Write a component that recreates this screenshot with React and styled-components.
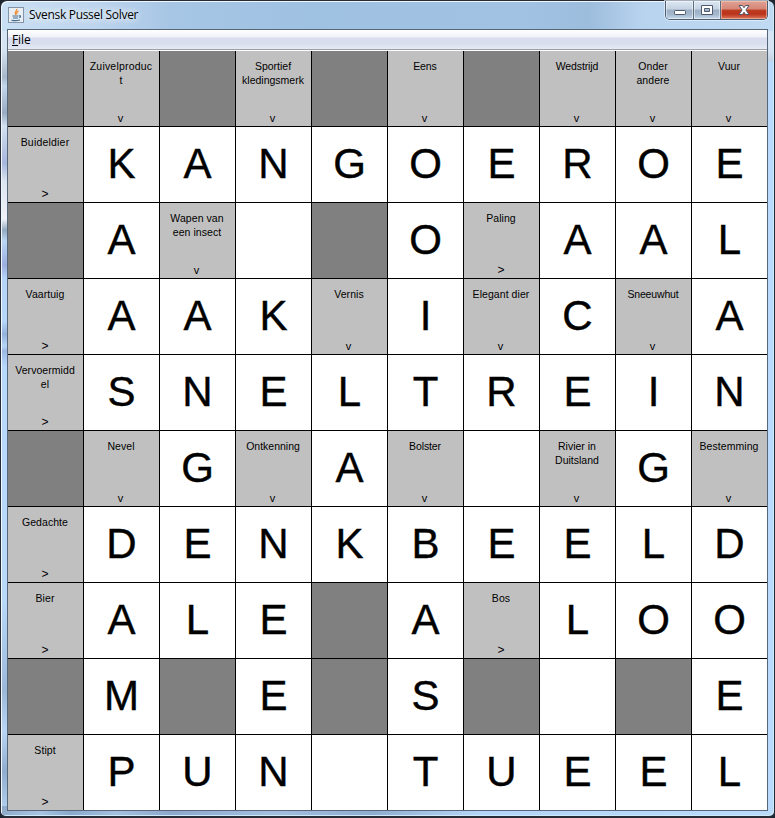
import React from "react";
import styled, { createGlobalStyle } from "styled-components";

const GlobalStyle = createGlobalStyle`
  html, body { margin: 0; padding: 0; background: #1d2530; overflow: hidden; }
  * { box-sizing: border-box; }
`;

const Frame = styled.div`
  display: flex;
  flex-direction: column;
  width: 775px;
  height: 818px;
  padding: 0 5px 5px 6px;
  border: 2px solid #272b36;
  border-width: 1px 1px 2px 1px;
  border-radius: 7px 7px 6px 6px;
  box-shadow: inset 1px 1px 0 #eef7ff, inset -1px -1px 0 #cbe9f8;
  background:
    linear-gradient(90deg, rgba(255,255,255,0) 12px, rgba(255,255,255,0) 762px, #b9dafa 763px) 0 60px no-repeat,
    linear-gradient(90deg, #8faac9 0, #a9c4e3 5%, #8ba9cc 9%, #a5bfdf 15%, #8da8cb 22%, #a3bedf 35%, #90accf 48%, #a8c4e6 56%, #b4d5f8 62%, #b9dafa) 0 100% / 100% 10px no-repeat,
    linear-gradient(90deg, #c9dff3 0, #bdd5ee 12%, #a7c6e5 22%, #9fc1e2 40%, #a1c2e3 68%, #9dbddd 76%, #b8d3ee 83%, #c0daf3) 0 0 / 100% 30px no-repeat,
    linear-gradient(180deg, #dcebfa 0, #d4e2f1 50px, #a8b7ca 76px, #c4d7ed 85px, #99abc2 112px, #d3e1f0 125px, #a7b6dd 162px, #dbe5f0 180px, #f0f2f7 218px, #94a9bf 229px, #bbd7f5 240px, #9baee0 264px, #b5d4f7 277px, #b7d7fa 320px, #94b1db 333px, #b5d5f8 345px, #9db9e2 350px, #b7d9fc 365px, #b9d9fa 600px, #9cb8d8 690px, #b9d7f5 730px, #91adce 770px, #b8d5f3 100%);
`;

const TitleBar = styled.header`
  display: flex;
  height: 28px;
  flex: none;
  align-items: flex-start;
  justify-content: space-between;
`;

const TitleGroup = styled.div`
  display: flex;
  gap: 5px;
  padding: 6px 0 0 1px;
`;

const Title = styled.span`
  font: 12px/16px "Open Sans", "Noto Sans", sans-serif;
  letter-spacing: ${(p) => p.$spacing};
  color: #000;
  text-shadow: 0 0 7px #fff, 0 0 9px #fff;
`;

const Controls = styled.div`
  display: flex;
  width: 103px;
  height: 19px;
  margin-right: 1px;
  border: 1px solid #4e5c70;
  border-top: 0;
  border-radius: 0 0 5px 5px;
  overflow: hidden;
  box-shadow: 0 0 0 1px rgba(230,244,255,.65);
`;

const ControlButton = styled.button`
  display: block;
  flex: 0 0 ${(p) => p.$width};
  height: 18px;
  padding: 0;
  border: 0;
  border-right: ${(p) => (p.$close ? 0 : "1px solid #5d6b7e")};
  box-shadow: inset 0 0 0 1px ${(p) => (p.$close ? "rgba(255,205,185,.55)" : "rgba(255,255,255,.5)")};
  background: ${(p) =>
    p.$close
      ? "linear-gradient(#e0a295 0, #d58676 45%, #bd3d25 50%, #bb3219 72%, #d9795f 100%)"
      : "linear-gradient(#dce8f4 0, #c4d2e1 45%, #9cafc5 50%, #a5b8ce 75%, #c5d8eb 100%)"};
  svg { display: block; margin: auto; }
`;

const Client = styled.main`
  display: flex;
  flex-direction: column;
  width: 761px;
  height: 782px;
  flex: none;
  border: 1px solid #56677a;
  background: #fff;
`;

const MenuBar = styled.nav`
  height: 21px;
  flex: none;
  padding: 3px 4px;
  background: linear-gradient(#fff 0, #f0f2f9 7px, #d9ddef 8px, #dadfef 14px, #e6eaf6 19px);
  border-bottom: 1px solid #fff;
  box-shadow: inset 0 -1px 0 #9d9fa5;
`;

const MenuItem = styled.span`
  display: block;
  font: 12px/14px "Open Sans", "Noto Sans", sans-serif;
  letter-spacing: -0.1px;
  u { text-underline-offset: 1px; }
`;

const Board = styled.section`
  display: grid;
  grid-template-columns: repeat(9, 76px) 75px;
  grid-template-rows: repeat(10, 76px);
  width: 759px;
  height: 759px;
  overflow: hidden;
  font-family: "Liberation Sans", Arial, sans-serif;
  color: #000;
`;

const Cell = styled.div`
  border-right: 1px solid #000;
  border-bottom: 1px solid #000;
  background: ${(p) => p.$fill};
  &:nth-child(10n) { border-right: 0; }
`;

const LetterCell = styled(Cell)`
  padding-top: 14px;
  font-size: 42px;
  line-height: 46px;
  text-align: center;
  -webkit-text-stroke: 0.4px #000;
`;

const ClueCell = styled(Cell)`
  display: flex;
  flex-direction: column;
  align-items: center;
  justify-content: space-between;
  padding: 8px 0 1px;
`;

const ClueText = styled.div`
  padding-right: 1px;
  font-size: 10.5px;
  line-height: 14px;
  text-align: center;
  white-space: pre;
  letter-spacing: ${(p) => p.$spacing}px;
`;

const Arrow = styled.div`
  font-size: ${(p) => (p.$right ? 12 : 11)}px;
  line-height: 14px;
  padding-right: ${(p) => (p.$right ? 1 : 2)}px;
`;

const JavaIcon = () => (
  <svg width="16" height="16" viewBox="0 0 16 16">
    <rect x=".5" y=".5" width="15" height="15" fill="#e8eef3" stroke="#8494a6" />
    <path d="M8.8 2C9.5 4 5.5 4.8 7.7 8M10.5 4.2C8 5.4 8.5 6 9 7.5" fill="none" stroke="#ef8a32" strokeWidth="1.3" />
    <path d="M4.5 9h6M5 11h5M3.5 13.2c2 .6 6 .5 8.5-.2M11 9c2-.7 2 1 .3 1.8" fill="none" stroke="#416d93" strokeWidth="1.2" />
  </svg>
);

const MinimizeIcon = () => (
  <svg width="14" height="14" viewBox="0 0 14 14">
    <rect x="1.5" y="7.5" width="11" height="4" rx=".7" fill="#fff" stroke="#515a6d" />
  </svg>
);

const MaximizeIcon = () => (
  <svg width="14" height="14" viewBox="0 0 14 14">
    <path d="M1.5 2.5h11v9h-11zM4.5 5.5v3h5v-3z" fill="#fff" fillRule="evenodd" stroke="#515a6d" />
  </svg>
);

const CloseIcon = () => (
  <svg width="14" height="14" viewBox="0 0 14 14">
    <path d="M2 2.5h3.4L7 4.7l1.6-2.2H12L8.9 7l3.1 4.5H8.6L7 9.3l-1.6 2.2H2L5.1 7z" fill="#fff" stroke="#535566" />
  </svg>
);

const clue = (text, arrow, spacing = 0.06) => ({ text, arrow, spacing });

// "#" is a blocked square, "_" is an empty answer square.
const rows = [
  ["#", clue("Zuivelproduc\nt", "v", 0.2), "#", clue("Sportief\nkledingsmerk", "v", 0), "#", clue("Eens", "v", -0.1), "#", clue("Wedstrijd", "v", -0.1), clue("Onder\nandere", "v"), clue("Vuur", "v")],
  [clue("Buideldier", ">", 0.2), ..."KANGOEROE"],
  ["#", "A", clue("Wapen van\neen insect", "v"), "_", "#", "O", clue("Paling", ">"), "A", "A", "L"],
  [clue("Vaartuig", ">"), "A", "A", "K", clue("Vernis", "v"), "I", clue("Elegant dier", "v"), "C", clue("Sneeuwhut", "v", -0.15), "A"],
  [clue("Vervoermidd\nel", ">"), ..."SNELTREIN"],
  ["#", clue("Nevel", "v"), "G", clue("Ontkenning", "v", 0), "A", clue("Bolster", "v", -0.1), "_", clue("Rivier in\nDuitsland", "v", 0), "G", clue("Bestemming", "v")],
  [clue("Gedachte", ">"), ..."DENKBEELD"],
  [clue("Bier", ">"), "A", "L", "E", "#", "A", clue("Bos", ">"), "L", "O", "O"],
  ["#", "M", "#", "E", "#", "S", "#", "_", "#", "E"],
  [clue("Stipt", ">"), ..."PUN_TUEEL"],
];

function Square({ value }) {
  if (value === "#") return <Cell $fill="#808080" />;
  if (typeof value === "string") {
    return <LetterCell $fill="#fff">{value === "_" ? "" : value}</LetterCell>;
  }
  return (
    <ClueCell $fill="#c0c0c0">
      <ClueText $spacing={value.spacing}>{value.text}</ClueText>
      <Arrow $right={value.arrow === ">"}>{value.arrow}</Arrow>
    </ClueCell>
  );
}

export default function App() {
  return (
    <>
      <GlobalStyle />
      <Frame>
        <TitleBar>
          <TitleGroup>
            <JavaIcon />
            <Title $spacing="-0.3px">Svensk Pussel Solver</Title>
          </TitleGroup>
          <Controls>
            <ControlButton $width="28px" aria-label="Minimize"><MinimizeIcon /></ControlButton>
            <ControlButton $width="27px" aria-label="Maximize"><MaximizeIcon /></ControlButton>
            <ControlButton $width="46px" $close aria-label="Close"><CloseIcon /></ControlButton>
          </Controls>
        </TitleBar>
        <Client>
          <MenuBar><MenuItem><u>F</u>ile</MenuItem></MenuBar>
          <Board>
            {rows.flatMap((row, y) => row.map((value, x) => <Square key={`${y}-${x}`} value={value} />))}
          </Board>
        </Client>
      </Frame>
    </>
  );
}
